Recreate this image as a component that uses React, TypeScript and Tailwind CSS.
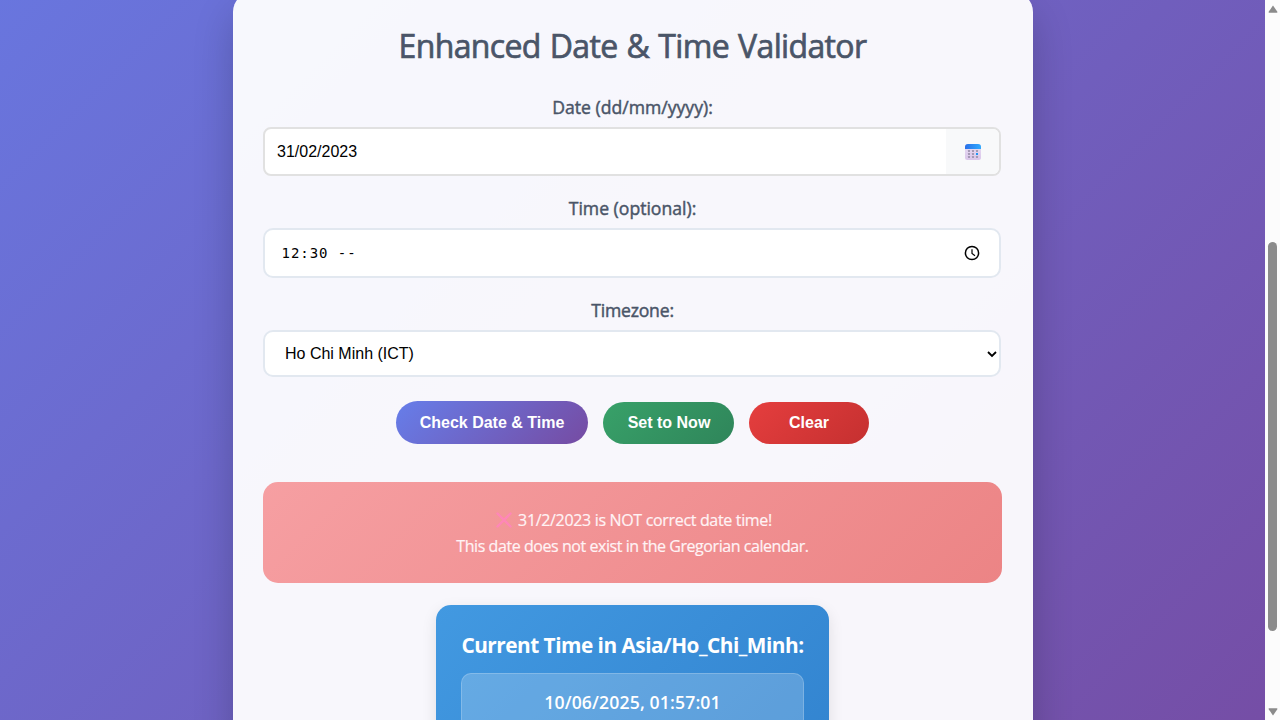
import React from "react";

function CalendarIcon() {
  const dots = [
    [4, 7], [8, 7], [12, 7],
    [4, 10], [8, 10],
    [4, 13], [8, 13], [12, 13],
  ];
  return (
    <svg width="16" height="16" viewBox="0 0 16 16" className="block">
      <defs>
        <linearGradient id="calTop" x1="0" y1="0" x2="1" y2="0">
          <stop offset="0" stopColor="#2a6fe8" />
          <stop offset="1" stopColor="#2fabff" />
        </linearGradient>
        <linearGradient id="calBody" x1="0" y1="0" x2="0" y2="1">
          <stop offset="0" stopColor="#e9dff3" />
          <stop offset="1" stopColor="#dac6ea" />
        </linearGradient>
      </defs>
      <rect x="0" y="0" width="16" height="16" rx="2.5" fill="url(#calBody)" />
      <path d="M0 5V3a3 3 0 0 1 3-3h10a3 3 0 0 1 3 3v2z" fill="url(#calTop)" />
      {dots.map(([x, y]) => (
        <rect key={`${x}-${y}`} x={x - 1} y={y - 1} width="2" height="2" rx="0.4" fill="#a196b1" />
      ))}
      <rect x="11" y="9" width="2" height="2" fill="#1d96f5" />
    </svg>
  );
}

function ClockIcon() {
  return (
    <svg width="16" height="16" viewBox="0 0 16 16" fill="none" stroke="#000" className="block">
      <circle cx="8" cy="8" r="6.6" strokeWidth="1.5" />
      <path d="M8 4.2v4.2l3 2.3" strokeWidth="1.2" />
    </svg>
  );
}

function Label({ children, className }: { children: React.ReactNode; className: string }) {
  return (
    <div className={`h-[26px] text-center text-[17.6px] leading-[26px] whitespace-nowrap text-[#4a5568] [-webkit-text-stroke:0.45px_#4a5568] ${className}`}>
      {children}
    </div>
  );
}

export default function App() {
  return (
    <div className="flex h-[720px] w-[1280px] overflow-hidden font-['Open_Sans','Noto_Sans',sans-serif]">
      <main className="flex h-full w-[1265px] justify-center overflow-hidden bg-linear-[135deg,#667eea_0%,#764ba2_100%] bg-[length:1265px_1277px] bg-[position:0_-420px] bg-no-repeat">
        <section className="-mt-[8px] flex h-[900px] w-[800px] shrink-0 flex-col items-center rounded-[20px] border border-white/20 bg-white/95 px-[29.5px] shadow-[0_20px_40px_rgba(0,0,0,0.2)]">
          <h1 className="mt-[29px] h-[48px] text-[32px] leading-[48px] tracking-[-0.65px] whitespace-nowrap text-[#4a5568] [-webkit-text-stroke:0.7px_#4a5568] [word-spacing:1.4px]">
            Enhanced Date &amp; Time Validator
          </h1>

          <Label className="mt-[24px]">Date (dd/mm/yyyy):</Label>
          <div className="mt-[7px] flex h-[49px] w-[738px] self-start overflow-hidden rounded-[8px] border-2 border-[#e1e1e1] bg-white">
            <div className="flex flex-1 items-center pl-[12px] font-['Liberation_Sans',Arial,sans-serif] text-[16px] text-black">31/02/2023</div>
            <div className="flex w-[53px] items-center justify-center bg-[#f8f9fa]">
              <CalendarIcon />
            </div>
          </div>

          <Label className="mt-[19px]">Time (optional):</Label>
          <div className="mt-[7px] flex h-[50px] w-[738px] items-center justify-between self-start rounded-[10px] border-2 border-[#e2e8f0] bg-white pr-[19px] pl-[16.5px]">
            <span className="font-['DejaVu_Sans_Mono',monospace] text-[14px] tracking-[0.95px] whitespace-pre text-black">12:30 --</span>
            <ClockIcon />
          </div>

          <Label className="mt-[19px] tracking-[-0.2px]">Timezone:</Label>
          <div className="mt-[7px] flex h-[47px] w-[738px] items-center justify-between self-start rounded-[10px] border-2 border-[#e2e8f0] bg-white pr-[2px] pl-[20px]">
            <span className="font-['Liberation_Sans',Arial,sans-serif] text-[16px] text-black">Ho Chi Minh (ICT)</span>
            <svg width="10" height="8" viewBox="0 0 10 8" fill="none" stroke="#000" strokeWidth="1.8">
              <path d="M1 2l4 4 4-4" />
            </svg>
          </div>

          <div className="mt-[24px] flex h-[43px] gap-[15px] font-['Liberation_Sans',Arial,sans-serif] text-[16px] font-bold text-white">
            <button className="h-[43px] w-[192px] rounded-full bg-linear-[135deg,#667eea,#764ba2]">Check Date &amp; Time</button>
            <button className="mt-px h-[42px] w-[131px] rounded-full bg-linear-[135deg,#38a169,#2f855a] pl-px">Set to Now</button>
            <button className="mt-px h-[42px] w-[120px] rounded-full bg-linear-[135deg,#e53e3e,#c53030]">Clear</button>
          </div>

          <div className="mt-[38px] flex h-[101px] w-[739px] shrink-0 flex-col items-center justify-center rounded-[15px] bg-linear-[135deg,#f69fa2,#ec8485] pt-px text-[16px] leading-[26px] whitespace-nowrap text-[#fff3f5] [-webkit-text-stroke:0.2px_#fff3f5]">
            <div className="flex items-center gap-[6px] pl-[3px]">
              <svg width="16" height="16" viewBox="0 0 16 16" fill="none" stroke="#ff86b8" strokeWidth="2.4" strokeLinecap="round">
                <path d="M1.5 1.5l13 13M14.5 1.5l-13 13" />
              </svg>
              <span className="tracking-[-0.33px]">31/2/2023 is NOT correct date time!</span>
            </div>
            <div className="tracking-[-0.44px]">This date does not exist in the Gregorian calendar.</div>
          </div>

          <div className="mt-[22px] flex h-[200px] w-[393px] shrink-0 flex-col items-center rounded-[15px] bg-linear-[135deg,#4299e1,#3182ce] px-[25px] text-white shadow-[0_5px_15px_rgba(0,0,0,0.1)]">
            <h2 className="mt-[24px] h-[32px] text-[20.8px] leading-[32px] font-bold tracking-[-0.5px] whitespace-nowrap">Current Time in Asia/Ho_Chi_Minh:</h2>
            <div className="mt-[12px] h-[59px] w-full rounded-[10px] border border-white/20 bg-white/20 text-center text-[17.6px] leading-[57px] font-semibold tracking-[0.15px] whitespace-nowrap">
              10/06/2025, 01:57:01
            </div>
          </div>
        </section>
      </main>

      <aside className="flex w-[15px] flex-col items-center bg-[#fcfcfc]">
        <svg width="10" height="8" viewBox="0 0 10 8" className="mt-[5px]">
          <path d="M5 0.5l4.5 6.5q0 .8-.8 .8H1.3q-.8 0-.8-.8z" fill="#8b8b8b" />
        </svg>
        <div className="mt-[229px] h-[389px] w-[9px] rounded-full bg-[#8b8b8b]" />
        <svg width="10" height="8" viewBox="0 0 10 8" className="mt-[77px]">
          <path d="M5 7.5L.5 1q0-.8.8-.8h7.4q.8 0 .8.8z" fill="#8b8b8b" />
        </svg>
      </aside>
    </div>
  );
}
